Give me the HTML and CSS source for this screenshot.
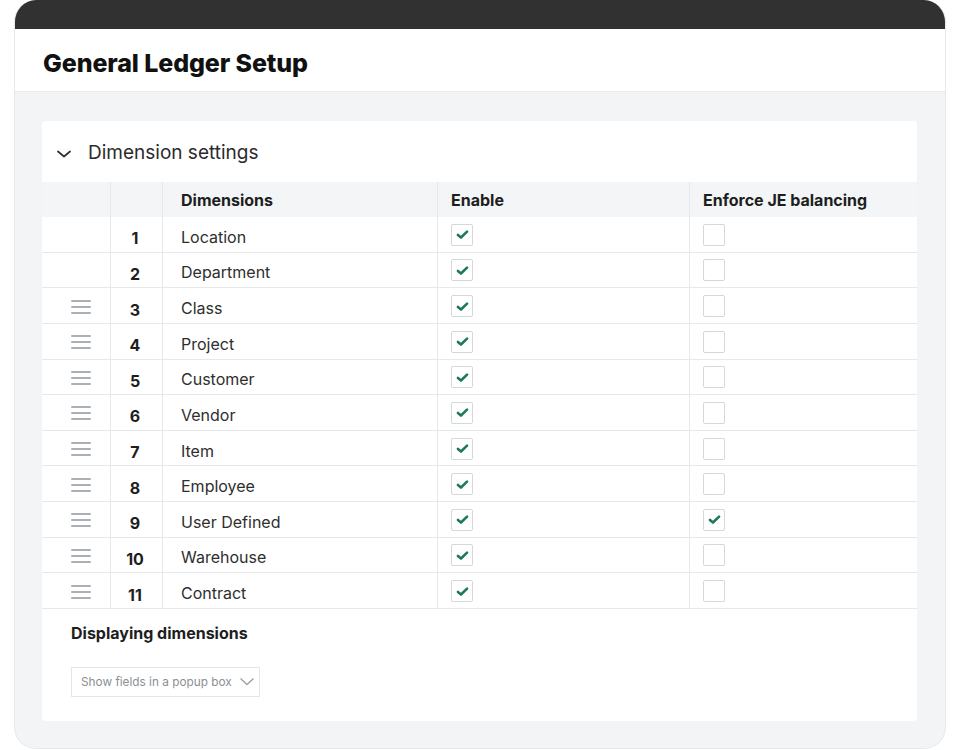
FILE: index.html
```html
<!DOCTYPE html>
<html lang="en">
<head>
<meta charset="utf-8">
<title>General Ledger Setup</title>
<link rel="stylesheet" href="styles.css">
</head>
<body>
<div class="frame">
  <div class="topbar"></div>
  <header class="page-header">
    <h1 class="page-title">General Ledger Setup</h1>
  </header>
  <main class="content">
    <section class="card">
      <div class="section-title">
        <svg class="chev" width="16" height="10" viewBox="0 0 16 10"><path d="M2 2.5 L8 7.5 L14 2.5" fill="none" stroke="#333" stroke-width="1.8" stroke-linecap="round" stroke-linejoin="round"/></svg>
        <span>Dimension settings</span>
      </div>
      <div class="table">
        <div class="row head">
          <div class="cell drag"></div>
          <div class="cell num"></div>
          <div class="cell name">Dimensions</div>
          <div class="cell chk">Enable</div>
          <div class="cell chk">Enforce JE balancing</div>
        </div>

        <div class="row">
          <div class="cell drag"></div>
          <div class="cell num">1</div>
          <div class="cell name">Location</div>
          <div class="cell chk"><span class="box on"><svg viewBox="0 0 12 10"><path d="M1.8 5.4 L4.6 7.8 L10.2 2.4"/></svg></span></div>
          <div class="cell chk"><span class="box"></span></div>
        </div>
        <div class="row">
          <div class="cell drag"></div>
          <div class="cell num">2</div>
          <div class="cell name">Department</div>
          <div class="cell chk"><span class="box on"><svg viewBox="0 0 12 10"><path d="M1.8 5.4 L4.6 7.8 L10.2 2.4"/></svg></span></div>
          <div class="cell chk"><span class="box"></span></div>
        </div>
        <div class="row">
          <div class="cell drag"><span class="grip"><i></i><i></i><i></i></span></div>
          <div class="cell num">3</div>
          <div class="cell name">Class</div>
          <div class="cell chk"><span class="box on"><svg viewBox="0 0 12 10"><path d="M1.8 5.4 L4.6 7.8 L10.2 2.4"/></svg></span></div>
          <div class="cell chk"><span class="box"></span></div>
        </div>
        <div class="row">
          <div class="cell drag"><span class="grip"><i></i><i></i><i></i></span></div>
          <div class="cell num">4</div>
          <div class="cell name">Project</div>
          <div class="cell chk"><span class="box on"><svg viewBox="0 0 12 10"><path d="M1.8 5.4 L4.6 7.8 L10.2 2.4"/></svg></span></div>
          <div class="cell chk"><span class="box"></span></div>
        </div>
        <div class="row">
          <div class="cell drag"><span class="grip"><i></i><i></i><i></i></span></div>
          <div class="cell num">5</div>
          <div class="cell name">Customer</div>
          <div class="cell chk"><span class="box on"><svg viewBox="0 0 12 10"><path d="M1.8 5.4 L4.6 7.8 L10.2 2.4"/></svg></span></div>
          <div class="cell chk"><span class="box"></span></div>
        </div>
        <div class="row">
          <div class="cell drag"><span class="grip"><i></i><i></i><i></i></span></div>
          <div class="cell num">6</div>
          <div class="cell name">Vendor</div>
          <div class="cell chk"><span class="box on"><svg viewBox="0 0 12 10"><path d="M1.8 5.4 L4.6 7.8 L10.2 2.4"/></svg></span></div>
          <div class="cell chk"><span class="box"></span></div>
        </div>
        <div class="row">
          <div class="cell drag"><span class="grip"><i></i><i></i><i></i></span></div>
          <div class="cell num">7</div>
          <div class="cell name">Item</div>
          <div class="cell chk"><span class="box on"><svg viewBox="0 0 12 10"><path d="M1.8 5.4 L4.6 7.8 L10.2 2.4"/></svg></span></div>
          <div class="cell chk"><span class="box"></span></div>
        </div>
        <div class="row">
          <div class="cell drag"><span class="grip"><i></i><i></i><i></i></span></div>
          <div class="cell num">8</div>
          <div class="cell name">Employee</div>
          <div class="cell chk"><span class="box on"><svg viewBox="0 0 12 10"><path d="M1.8 5.4 L4.6 7.8 L10.2 2.4"/></svg></span></div>
          <div class="cell chk"><span class="box"></span></div>
        </div>
        <div class="row">
          <div class="cell drag"><span class="grip"><i></i><i></i><i></i></span></div>
          <div class="cell num">9</div>
          <div class="cell name">User Defined</div>
          <div class="cell chk"><span class="box on"><svg viewBox="0 0 12 10"><path d="M1.8 5.4 L4.6 7.8 L10.2 2.4"/></svg></span></div>
          <div class="cell chk"><span class="box on"><svg viewBox="0 0 12 10"><path d="M1.8 5.4 L4.6 7.8 L10.2 2.4"/></svg></span></div>
        </div>
        <div class="row">
          <div class="cell drag"><span class="grip"><i></i><i></i><i></i></span></div>
          <div class="cell num">10</div>
          <div class="cell name">Warehouse</div>
          <div class="cell chk"><span class="box on"><svg viewBox="0 0 12 10"><path d="M1.8 5.4 L4.6 7.8 L10.2 2.4"/></svg></span></div>
          <div class="cell chk"><span class="box"></span></div>
        </div>
        <div class="row">
          <div class="cell drag"><span class="grip"><i></i><i></i><i></i></span></div>
          <div class="cell num">11</div>
          <div class="cell name">Contract</div>
          <div class="cell chk"><span class="box on"><svg viewBox="0 0 12 10"><path d="M1.8 5.4 L4.6 7.8 L10.2 2.4"/></svg></span></div>
          <div class="cell chk"><span class="box"></span></div>
        </div>
      </div>
      <div class="display">
        <h2 class="display-title">Displaying dimensions</h2>
        <div class="select">
          <span class="select-label">Show fields in a popup box</span>
          <svg class="select-chev" width="16" height="9" viewBox="0 0 16 9"><path d="M1.5 1.5 L8 7.5 L14.5 1.5" fill="none" stroke="#9a9fa4" stroke-width="1.3" stroke-linejoin="round"/></svg>
        </div>
      </div>
    </section>
  </main>
</div>
</body>
</html>
```

FILE: styles.css
```css
* { box-sizing: border-box; }
html, body { margin: 0; padding: 0; background: #ffffff; }
body { font-family: Inter, "Noto Sans", "Liberation Sans", sans-serif; color: #222; }

.frame {
  margin: 0 14px;
  height: 749px;
  background: #f2f4f5;
  border: 1px solid #e6e9eb;
  border-top: none;
  border-radius: 22px;
  overflow: hidden;
  display: flex;
  flex-direction: column;
}
.topbar {
  height: 29px;
  background: #313131;
  margin: 0 -1px;
}

.page-header {
  height: 63px;
  background: #ffffff;
  border-bottom: 1px solid #e7eaec;
  padding: 5px 0 0 28px;
  display: flex;
  align-items: center;
}
.page-title {
  margin: 0;
  font-size: 25px;
  font-weight: 800;
  letter-spacing: -0.1px;
  color: #111;
}

.content {
  padding: 29px 28px 27px 27px;
  flex: 1;
  display: flex;
}
.card {
  flex: 1;
  background: #ffffff;
  border-radius: 4px;
  display: flex;
  flex-direction: column;
}
.section-title {
  height: 61px;
  display: flex;
  align-items: center;
  padding: 2px 0 0 14px;
  font-size: 19px;
  color: #2b2b2b;
  gap: 16px;
}
.chev { margin-top: 2px; }

.table { display: flex; flex-direction: column; }
.row {
  display: grid;
  grid-template-columns: 68px 52px 275px 252px 1fr;
  height: 35.64px;
  border-bottom: 1px solid #e6e9eb;
  font-size: 16px;
  color: #2e2e2e;
}
.row.head {
  height: 35px;
  background: #f3f5f6;
  border-bottom: none;
  font-weight: 700;
  color: #1e1e1e;
}
.cell {
  display: flex;
  align-items: center;
}
.cell + .cell { border-left: 1px solid #e6e9eb; }
.cell.name { padding-left: 18px; padding-top: 5px; }
.cell.chk { padding-left: 13px; }
.row.head .cell.name, .row.head .cell.chk { padding-top: 0; }
.cell.num {
  justify-content: center;
  font-weight: 700;
  font-size: 16px;
  color: #1e1e1e;
  padding-top: 8px;
  padding-right: 3px;
}
.cell.drag { padding-left: 29px; padding-top: 2px; }

.grip {
  display: flex;
  flex-direction: column;
  gap: 4px;
  width: 20px;
}
.grip i {
  display: block;
  height: 2px;
  background: #aab0b5;
  border-radius: 1px;
}

.box {
  width: 22px;
  height: 22px;
  border: 1px solid #d4d8db;
  border-radius: 2px;
  display: flex;
  align-items: center;
  justify-content: center;
  background: #fff;
  margin-top: 1px;
}
.box svg { width: 13px; height: 11px; }
.box svg path {
  fill: none;
  stroke: #1d7a55;
  stroke-width: 2.4;
  stroke-linecap: round;
  stroke-linejoin: round;
}

.display { padding: 14px 0 0 29px; }
.display-title {
  margin: 0;
  font-size: 16px;
  font-weight: 700;
  line-height: 20px;
  color: #1e1e1e;
}
.select {
  margin-top: 24px;
  width: 189px;
  height: 30px;
  border: 1px solid #e3e6e8;
  display: flex;
  align-items: center;
  gap: 7px;
  padding: 0 6px 0 9px;
  font-size: 11.8px;
  color: #8a8f94;
}
.select-label { white-space: nowrap; }
.select-chev { flex-shrink: 0; }
```
